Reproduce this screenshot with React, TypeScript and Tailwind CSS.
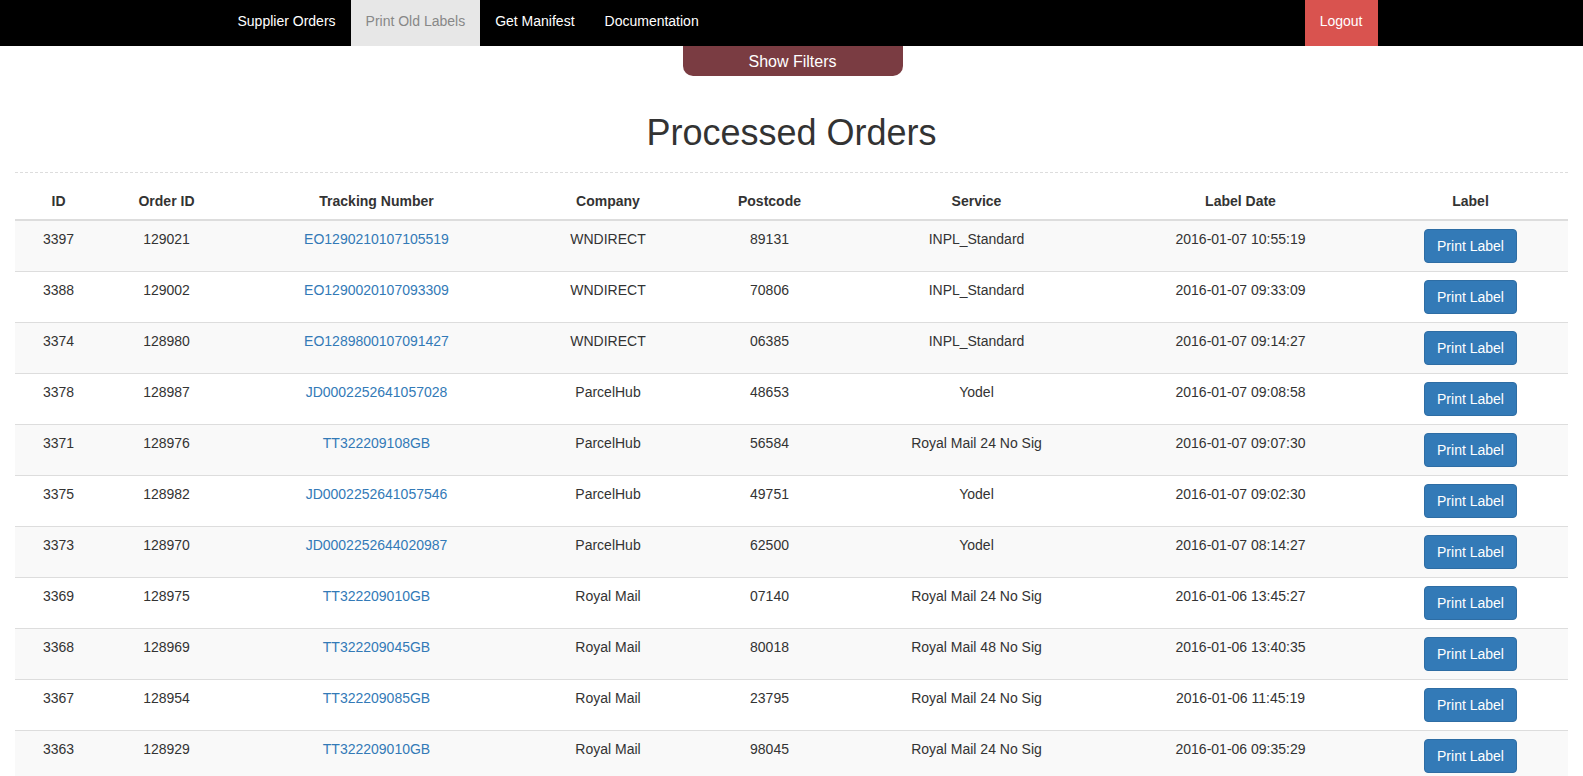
import React from "react";

const rows: [string, string, string, string, string, string, string][] = [
  ["3397", "129021", "EO1290210107105519", "WNDIRECT", "89131", "INPL_Standard", "2016-01-07 10:55:19"],
  ["3388", "129002", "EO1290020107093309", "WNDIRECT", "70806", "INPL_Standard", "2016-01-07 09:33:09"],
  ["3374", "128980", "EO1289800107091427", "WNDIRECT", "06385", "INPL_Standard", "2016-01-07 09:14:27"],
  ["3378", "128987", "JD0002252641057028", "ParcelHub", "48653", "Yodel", "2016-01-07 09:08:58"],
  ["3371", "128976", "TT322209108GB", "ParcelHub", "56584", "Royal Mail 24 No Sig", "2016-01-07 09:07:30"],
  ["3375", "128982", "JD0002252641057546", "ParcelHub", "49751", "Yodel", "2016-01-07 09:02:30"],
  ["3373", "128970", "JD0002252644020987", "ParcelHub", "62500", "Yodel", "2016-01-07 08:14:27"],
  ["3369", "128975", "TT322209010GB", "Royal Mail", "07140", "Royal Mail 24 No Sig", "2016-01-06 13:45:27"],
  ["3368", "128969", "TT322209045GB", "Royal Mail", "80018", "Royal Mail 48 No Sig", "2016-01-06 13:40:35"],
  ["3367", "128954", "TT322209085GB", "Royal Mail", "23795", "Royal Mail 24 No Sig", "2016-01-06 11:45:19"],
  ["3363", "128929", "TT322209010GB", "Royal Mail", "98045", "Royal Mail 24 No Sig", "2016-01-06 09:35:29"],
];

const headers = ["ID", "Order ID", "Tracking Number", "Company", "Postcode", "Service", "Label Date", "Label"];

export default function App() {
  return (
    <div className="min-h-screen bg-white font-['Liberation_Sans',Arial,sans-serif] text-[14px] leading-[20px] text-[#333]">
      <nav className="h-[46px] bg-black">
        <div className="mx-auto flex h-full w-[1170px] pl-[16px] pr-[14px]">
          <ul className="flex h-full">
            <li className="h-full px-[15px] pt-[11px] text-white">Supplier Orders</li>
            <li className="h-full bg-[#e7e7e7] px-[15px] pt-[11px] text-[#888]">Print Old Labels</li>
            <li className="h-full px-[15px] pt-[11px] text-white">Get Manifest</li>
            <li className="h-full px-[15px] pt-[11px] text-white">Documentation</li>
          </ul>
          <ul className="ml-auto mr-[-15px] flex h-full">
            <li className="h-full bg-[#d9534f] px-[15px] pt-[11px] text-white">Logout</li>
          </ul>
        </div>
      </nav>
      <div className="px-[15px]">
        <div className="flex justify-center">
          <button className="ml-[2px] h-[30px] w-[220px] rounded-b-[10px] bg-[#7a3c42] pt-[1px] text-[16px] leading-[22px] text-white">
            Show Filters
          </button>
        </div>
        <div className="mb-[10px] mt-[37px] border-b border-dashed border-[#ddd] pb-[19px]">
          <h1 className="text-center text-[36px] font-normal leading-[40px] text-[#333]">Processed Orders</h1>
        </div>
        <table className="w-full table-fixed border-collapse">
          <colgroup>
            <col className="w-[87px]" />
            <col className="w-[129px]" />
            <col className="w-[291px]" />
            <col className="w-[172px]" />
            <col className="w-[151px]" />
            <col className="w-[263px]" />
            <col className="w-[265px]" />
            <col className="w-[195px]" />
          </colgroup>
          <thead>
            <tr className="border-b-2 border-[#ddd]">
              {headers.map((h) => (
                <th key={h} className="p-[8px] text-center align-bottom font-bold">
                  {h}
                </th>
              ))}
            </tr>
          </thead>
          <tbody>
            {rows.map((r, i) => (
              <tr key={i} className={`border-t border-[#ddd] ${i % 2 === 0 ? "bg-[#f9f9f9]" : "bg-white"}`}>
                <td className="p-[8px] text-center align-top">{r[0]}</td>
                <td className="p-[8px] text-center align-top">{r[1]}</td>
                <td className="p-[8px] text-center align-top">
                  <a className="text-[#337ab7]">{r[2]}</a>
                </td>
                <td className="p-[8px] text-center align-top">{r[3]}</td>
                <td className="p-[8px] text-center align-top">{r[4]}</td>
                <td className="p-[8px] text-center align-top">{r[5]}</td>
                <td className="p-[8px] text-center align-top">{r[6]}</td>
                <td className="p-[8px] text-center align-top">
                  <button className="h-[34px] rounded-[4px] border border-[#2e6da4] bg-[#337ab7] px-[12px] py-[6px] text-[14px] leading-[20px] text-white">
                    Print Label
                  </button>
                </td>
              </tr>
            ))}
          </tbody>
        </table>
      </div>
    </div>
  );
}
